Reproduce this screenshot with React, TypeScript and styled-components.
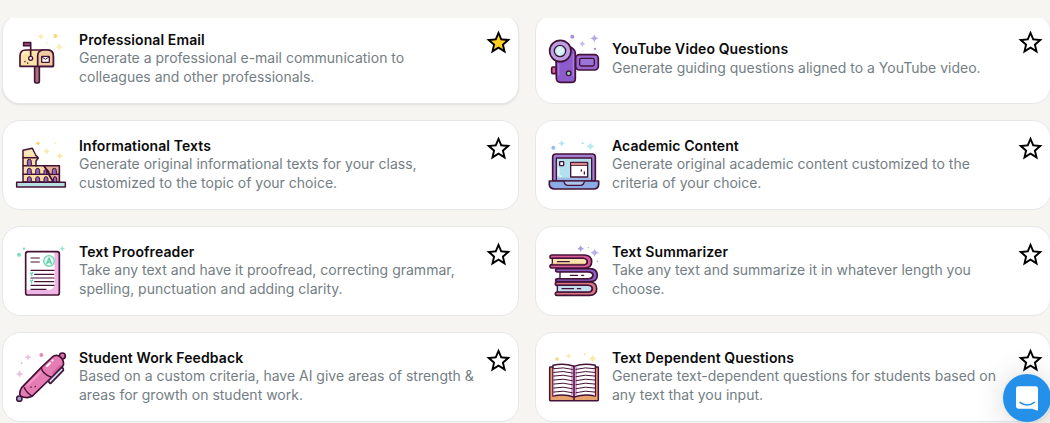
import React, { useState } from 'react';
import styled, { createGlobalStyle } from 'styled-components';

//?-------------- variables ------------------//
const pageBg = '#f6f5f1';
const black = '#0b0b0c';
const grey = '#747e84';
const cardBorder = '#e6e7ea';
const blue = '#2590ea';
const gold = '#ffcf24';
const ink = '#451237';

const GlobalStyle = createGlobalStyle`
  * {
    box-sizing: border-box;
  }
  body {
    margin: 0;
    background: ${pageBg};
    font-family: Inter, sans-serif;
    overflow: hidden;
  }
`;

//?-------------- layout ------------------//
const Page = styled.div`
  height: 423px;
  padding-top: 18px;
  background: ${pageBg};
  overflow: hidden;
`;

const ListClip = styled.div`
  height: 405px;
  overflow: hidden;
`;

const Grid = styled.div`
  display: grid;
  grid-template-columns: 517px 516px;
  grid-auto-rows: 90px;
  gap: 16px;
  margin: -4px 0 0 2px;
`;

const Card = styled.div<{ $raised?: boolean }>`
  display: flex;
  align-items: center;
  padding: 0 8px 0 11px;
  border: 1px solid ${cardBorder};
  border-radius: 18px;
  background: #fff;
  box-shadow: ${(p) => (p.$raised ? '0 1px 2px rgba(0, 0, 0, 0.09)' : 'none')};
`;

const Picture = styled.svg`
  flex: none;
  width: 54px;
  height: 54px;
  margin-right: 11px;
  stroke-linecap: round;
  stroke-linejoin: round;
`;

const TextCol = styled.div`
  flex: 1;
  display: flex;
  flex-direction: column;
`;

const Title = styled.span`
  margin: -0.25px 0 0.25px;
  font-size: 14px;
  line-height: 18px;
  font-weight: 600;
  letter-spacing: 0.1px;
  color: ${black};
  white-space: nowrap;
`;

const Description = styled.span`
  font-size: 14px;
  line-height: 18.7px;
  color: ${grey};
  white-space: pre;
`;

const StarButton = styled.button`
  flex: none;
  align-self: flex-start;
  display: flex;
  margin-top: 13px;
  margin-right: -2.5px;
  padding: 0;
  border: 0;
  background: none;
  cursor: pointer;
`;

const ChatButton = styled.button`
  position: fixed;
  left: 1003px;
  top: 374px;
  width: 48px;
  height: 48px;
  padding: 0;
  border: 0;
  border-radius: 50%;
  background: ${blue};
  box-shadow: 0 1px 6px rgba(0, 0, 0, 0.06), 0 2px 32px rgba(0, 0, 0, 0.16);
  cursor: pointer;
`;

//?-------------- drawings ------------------//
interface SparkleProps {
  x: number;
  y: number;
  r: number;
  color: string;
}

const Sparkle = ({ x, y, r, color }: SparkleProps) => (
  <path
    fill={color}
    d={`M${x} ${y - r}Q${x + r * 0.15} ${y - r * 0.15} ${x + r} ${y}Q${x + r * 0.15} ${y + r * 0.15} ${x} ${y + r}Q${x - r * 0.15} ${y + r * 0.15} ${x - r} ${y}Q${x - r * 0.15} ${y - r * 0.15} ${x} ${y - r}z`}
  />
);

const Mailbox = () => (
  <Picture viewBox="42 36 162 162">
    <Sparkle x={123} y={50} r={10} color="#fbeeb0" />
    <Sparkle x={178} y={81} r={12} color="#fbeeb0" />
    <Sparkle x={140} y={69} r={5} color="#fbeeb0" />
    <circle cx="166" cy="48" r="6" fill="#fbd873" />
    <g stroke={ink} strokeWidth="5">
      <rect x="104" y="137" width="14" height="52" rx="5" fill="#a8747c" />
      <path d="M60 139V108Q60 90 77 90H143Q160 90 160 108V139z" fill="#fae3a6" />
      <path d="M113 139V108Q113 91 130 90H144Q160 91 160 108V139z" fill="#f0cba2" />
      <path d="M92 110V68H71V77H92" fill="#b96587" />
      <circle cx="92" cy="115" r="6" fill="#fff" strokeWidth="4" />
      <rect x="125" y="109" width="23" height="18" rx="2" fill="#fff" strokeWidth="4" />
      <path d="M126 111L136 118 147 111" fill="none" strokeWidth="3" />
      <path d="M75 124v1M83 129v1" strokeWidth="4" />
    </g>
    <path d="M69 103Q69 98 76 98H84" stroke="#fff5d2" strokeWidth="4" fill="none" />
  </Picture>
);

const Camcorder = () => (
  <Picture viewBox="36 36 162 162">
    <circle cx="112" cy="50" r="6" fill="#a78ed8" />
    <circle cx="180" cy="87" r="3.5" fill="#a78ed8" />
    <Sparkle x={178} y={55} r={13} color="#b8a9e5" />
    <Sparkle x={142} y={71} r={9} color="#c3b6ea" />
    <g stroke={ink} strokeWidth="5">
      <rect x="50" y="141" width="14" height="20" rx="4" fill="#d9629a" />
      <path d="M63 108H101L105 80Q121 87 121 100V176Q121 187 109 187H77Q64 187 64 174z" fill="#8c5bcc" />
      <rect x="122" y="104" width="68" height="46" rx="11" fill="#9869d4" />
      <rect x="134" y="115" width="44" height="23" rx="5" fill="#9a74d8" strokeWidth="4" />
      <circle cx="76" cy="93" r="32" fill="#bca0df" />
      <circle cx="75" cy="93" r="17" fill="#c2f0f4" strokeWidth="4" />
      <circle cx="101" cy="160" r="7" fill="#8ad9c5" strokeWidth="4" />
    </g>
    <path d="M67 94L76 84M70 102L84 88" stroke="#fff" strokeWidth="4" />
    <path d="M71 132V165M115 103V169" stroke="#a77be0" strokeWidth="4" />
  </Picture>
);

const Colosseum = () => (
  <Picture viewBox="42 39 162 162">
    <circle cx="114" cy="55" r="5" fill="#fbd271" />
    <circle cx="166" cy="54" r="2.5" fill="#fbe7a0" />
    <Sparkle x={140} y={79} r={11} color="#fae9ae" />
    <Sparkle x={179} y={93} r={12} color="#fae9ae" />
    <g stroke={ink} strokeWidth="4.5">
      <path d="M69 171V76L97 70 106 89 115 99 108 108V122H178V171z" fill="#fae0a6" />
      <path d="M132 122H178V171H159z" fill="#e3ae96" />
      <path d="M69 98H112M69 122H110M69 148H178" fill="none" />
      <path d="M132 124L146 140 149 154 160 169" fill="none" />
    </g>
    <path d="M72 91Q84 90 105 90L96 74 73 79z" fill="#fbe8b6" />
    <g fill="#9068b8" stroke={ink} strokeWidth="3">
      <path d="M82 121V109Q82 103 88 103T94 109V121" />
      <path d="M82 147V137Q82 130 88 130T94 137V147M107 147V137Q107 130 113 130T119 137V147M132 147V137Q134 130 140 138V147M157 147V137Q157 130 163 130T169 137V147" />
      <path d="M82 170V162Q82 155 88 155T94 162V170M107 170V162Q107 155 113 155T119 162V170M132 170V162Q132 155 138 155T144 162V170M160 170V162Q160 155 165 155T170 162V170" />
    </g>
    <rect x="50" y="172" width="146" height="14" fill="#b5dfe3" stroke={ink} strokeWidth="4.5" />
  </Picture>
);

const Laptop = () => (
  <Picture viewBox="36 39 162 162">
    <circle cx="55" cy="68" r="6" fill="#91bdea" />
    <circle cx="143" cy="55" r="3" fill="#9ce0e4" />
    <Sparkle x={80} y={55} r={11} color="#b6e9ef" />
    <Sparkle x={166} y={64} r={13} color="#b6e9ef" />
    <g stroke={ink} strokeWidth="5">
      <path d="M53 168V96Q53 87 63 87H171Q181 87 181 96V168z" fill="#a27fd3" />
      <rect x="64" y="99" width="106" height="69" fill="#b2e1ee" strokeWidth="4" />
    </g>
    <path d="M66 158H168V166H66z" fill="#9ab8e7" />
    <path d="M71 130v20M76 154h1" stroke="#e1f7fa" strokeWidth="6" />
    <g stroke={ink} strokeWidth="4">
      <rect x="107" y="112" width="51" height="44" fill="#fff" />
      <path d="M108 113H157V121H108z" fill="#f5a09b" strokeWidth="3" />
      <rect x="74" y="110" width="12" height="12" rx="2" fill="#fff" />
      <path d="M139 135v3M148 141v6" />
      <path d="M43 168H191V179Q190 192 176 192H59Q44 191 43 179z" fill="#8caae3" strokeWidth="5" />
      <path d="M87 170Q89 181 99 181H136Q146 181 148 170" fill="#a9c7ef" />
    </g>
  </Picture>
);

const PaperSheet = () => (
  <Picture viewBox="42 36 162 162">
    <circle cx="57" cy="68" r="6" fill="#80dbbf" />
    <circle cx="72" cy="50" r="3.5" fill="#80dbbf" />
    <Sparkle x={187} y={50} r={8} color="#98e6ce" />
    <rect x="77" y="59" width="101" height="130" rx="7" fill="#fff" />
    <path d="M163 60H171Q177 60 177 66V183Q177 188 171 188H84Q79 188 79 180V173H148Q164 171 164 157z" fill="#efb5e5" />
    <rect x="77" y="59" width="101" height="130" rx="7" fill="none" stroke={ink} strokeWidth="5" />
    <circle cx="147" cy="87" r="16" fill="#e3f9f1" stroke="#72d5b4" strokeWidth="4" />
    <path d="M140 95L147 78 154 95M142 90H152" fill="none" stroke="#5ecca5" strokeWidth="4" />
    <path d="M93 78H118M93 90H118M93 115H162M104 127H161M93 138H162M104 149H161M93 160H162M93 172H138" stroke={ink} strokeWidth="3.7" />
    <path d="M92 123L95 127 98 122M92 145L95 149 98 144M95 129v2M95 151v2" fill="none" stroke="#68d3ac" strokeWidth="4" />
  </Picture>
);

const Books = () => (
  <Picture viewBox="36 36 162 162">
    <Sparkle x={137} y={50} r={10} color="#a99fe4" />
    <Sparkle x={179} y={62} r={13} color="#b9b0ec" />
    <circle cx="160" cy="47" r="2" fill="#a99fe4" />
    <circle cx="187" cy="88" r="2.5" fill="#a99fe4" />
    <g stroke={ink} strokeWidth="5">
      <path d="M66 150H163Q185 150 185 170T163 190H66Q61 190 61 185 61 180 67 180H160Q172 179 172 170T160 160H66Q61 160 61 155 61 150 66 150z" fill="#d9777f" />
      <path d="M67 160H159Q171 161 171 170T159 180H67z" fill="#c1e1f2" strokeWidth="4" />
      <path d="M68 110H164Q187 111 187 130T164 149H68Q62 149 62 144 63 140 71 140H160Q174 140 174 130T160 120H68Q62 120 62 115T68 110z" fill="#8960c9" />
      <path d="M75 120H159Q173 121 173 130T159 140H75z" fill="#fff" strokeWidth="4" />
      <path d="M51 69H147Q170 70 170 89T147 108H50Q45 108 45 103T50 98H145Q157 97 157 89T145 79H50Q45 79 45 74T51 69z" fill="#d85c98" />
      <path d="M52 79H144Q156 80 156 89T144 98H52z" fill="#fae4ad" strokeWidth="4" />
    </g>
    <path d="M54 95H146" stroke="#e8b986" strokeWidth="3" />
    <path d="M67 89H103M106 130H128M140 130H146M81 170H116M127 170H137" stroke={ink} strokeWidth="3.5" />
  </Picture>
);

const Pen = () => (
  <Picture viewBox="42 30 162 162">
    <circle cx="124" cy="45" r="6" fill="#e58cba" />
    <circle cx="65" cy="69" r="2.5" fill="#e58cba" />
    <Sparkle x={84} y={52} r={10} color="#e9c0e1" />
    <Sparkle x={59} y={102} r={12} color="#ecc0df" />
    <g stroke={ink} strokeWidth="5">
      <path d="M145 119L183 83Q191 82 190 91L152 130Q146 130 145 119z" fill="#cbd6f2" />
      <circle cx="187" cy="48" r="9" fill="#d674a6" />
      <path d="M61 168Q56 158 65 143L124 82 157 51Q169 41 181 51 193 61 190 76L156 111 96 169Q81 177 61 168z" fill="#e57db4" />
      <path d="M124 82Q126 101 153 111M73 143Q79 157 96 168" fill="none" strokeWidth="4" />
      <circle cx="58" cy="176" r="8" fill="#9ca8d8" strokeWidth="4.5" />
      <path d="M93 141v1M106 139v1" strokeWidth="4" />
    </g>
    <path d="M84 134L122 96" stroke="#f199c7" strokeWidth="6" />
    <path d="M141 78L150 70M157 62L158 61" stroke="#fff" strokeWidth="6" />
    <path d="M158 100L181 77" stroke="#d062a0" strokeWidth="5" />
  </Picture>
);

const sheetLines = [83, 94, 105, 117, 129, 141, 153];

const OpenBook = () => (
  <Picture viewBox="36 30 162 162">
    <circle cx="66" cy="57" r="5" fill="#fbd46f" />
    <circle cx="149" cy="43" r="2.5" fill="#f4d476" />
    <Sparkle x={101} y={48} r={9} color="#faecb7" />
    <Sparkle x={173} y={56} r={13} color="#faeaae" />
    <g stroke={ink} strokeWidth="4.5">
      <rect x="44" y="81" width="146" height="101" rx="2" fill="#e5a16e" />
      <path d="M54 76Q88 69 117 79 148 68 181 76V168Q149 160 117 171 88 161 54 168z" fill="#fff" />
    </g>
    <path d="M108 79Q117 85 126 79V165L117 169 108 165z" fill="#dda0d8" />
    <path d="M57 88V165M178 88V165" stroke="#f0c7e9" strokeWidth="4" />
    <g stroke={ink} strokeWidth="3" fill="none">
      {sheetLines.map((y) => (
        <path key={y} d={`M56 ${y + 3}Q85 ${y - 3} 112 ${y + 5}M123 ${y + 5}Q151 ${y - 3} 179 ${y + 3}`} />
      ))}
      <path d="M117 78V181" strokeWidth="4.5" />
    </g>
  </Picture>
);

const Star = ({ filled }: { filled: boolean }) => (
  <svg width="29" height="29" viewBox="0 0 24 24">
    <path fill="#000" d="M22 9.24l-7.19-.62L12 2 9.19 8.63 2 9.24l5.46 4.73L5.82 21 12 17.27 18.18 21l-1.63-7.03L22 9.24z" />
    <path
      fill={filled ? gold : '#fff'}
      d="M12 15.4l-3.76 2.27 1-4.28-3.32-2.88 4.38-.38L12 6.1l1.71 4.04 4.38.38-3.32 2.88 1 4.28L12 15.4z"
    />
  </svg>
);

//?-------------- data ------------------//
interface Tool {
  title: string;
  description: string;
  Icon: () => React.JSX.Element;
}

const tools: Tool[] = [
  {
    title: 'Professional Email',
    description: 'Generate a professional e-mail communication to\ncolleagues and other professionals.',
    Icon: Mailbox,
  },
  {
    title: 'YouTube Video Questions',
    description: 'Generate guiding questions aligned to a YouTube video.',
    Icon: Camcorder,
  },
  {
    title: 'Informational Texts',
    description: 'Generate original informational texts for your class,\ncustomized to the topic of your choice.',
    Icon: Colosseum,
  },
  {
    title: 'Academic Content',
    description: 'Generate original academic content customized to the\ncriteria of your choice.',
    Icon: Laptop,
  },
  {
    title: 'Text Proofreader',
    description: 'Take any text and have it proofread, correcting grammar,\nspelling, punctuation and adding clarity.',
    Icon: PaperSheet,
  },
  {
    title: 'Text Summarizer',
    description: 'Take any text and summarize it in whatever length you\nchoose.',
    Icon: Books,
  },
  {
    title: 'Student Work Feedback',
    description: 'Based on a custom criteria, have AI give areas of strength &\nareas for growth on student work.',
    Icon: Pen,
  },
  {
    title: 'Text Dependent Questions',
    description: 'Generate text-dependent questions for students based on\nany text that you input.',
    Icon: OpenBook,
  },
];

export default function App() {
  const [favorites, setFavorites] = useState<string[]>(['Professional Email']);

  const toggle = (title: string) =>
    setFavorites((prev) => (prev.includes(title) ? prev.filter((t) => t !== title) : [...prev, title]));

  return (
    <Page>
      <GlobalStyle />
      <ListClip>
        <Grid>
          {tools.map(({ title, description, Icon }, i) => (
            <Card key={title} $raised={i === 0}>
              <Icon />
              <TextCol>
                <Title>{title}</Title>
                <Description>{description}</Description>
              </TextCol>
              <StarButton onClick={() => toggle(title)}>
                <Star filled={favorites.includes(title)} />
              </StarButton>
            </Card>
          ))}
        </Grid>
      </ListClip>
      <ChatButton>
        <svg width="48" height="48" viewBox="0 0 144 144">
          <path fill="#fff" d="M46 37H98Q105 37 105 44V110L87 104H46Q39 104 39 97V44Q39 37 46 37z" />
          <path d="M51 85Q72 101 94 85" fill="none" stroke={blue} strokeWidth="4.5" strokeLinecap="round" />
        </svg>
      </ChatButton>
    </Page>
  );
}
